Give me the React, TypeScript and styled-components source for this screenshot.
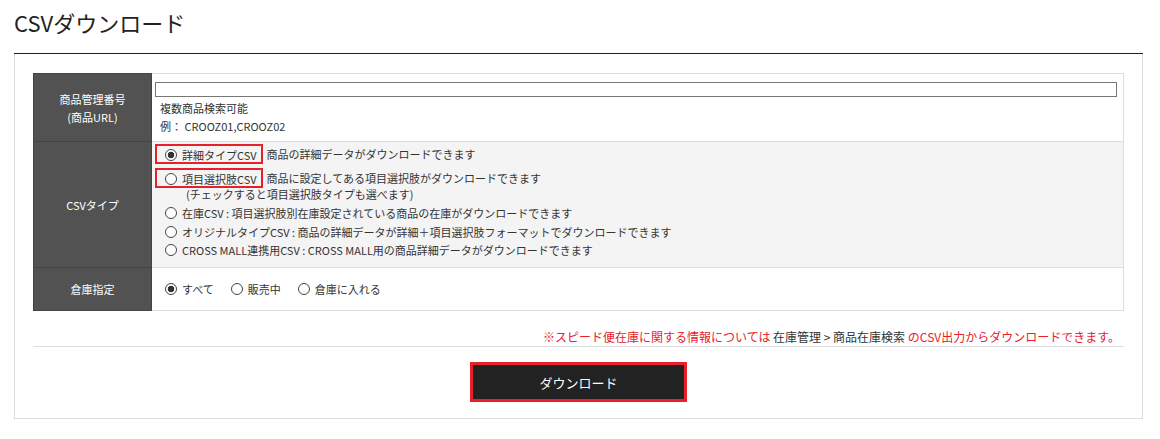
import React from "react";
import styled, { createGlobalStyle, css } from "styled-components";

const RED = "#e8202a";

const GlobalStyle = createGlobalStyle`
  body {
    margin: 0;
    background: #fff;
    color: #333;
    font-family: "Noto Sans CJK JP", "Noto Sans", sans-serif;
    font-size: 11px;
  }
`;

const Page = styled.div`
  padding: 0 17px 0 14px;
`;

const TitleBar = styled.div`
  height: 54px;
  box-sizing: border-box;
  padding-top: 7px;
  border-bottom: 1px solid #222;
`;

const Title = styled.h1`
  margin: 0;
  font-size: 22px;
  font-weight: 400;
  line-height: 30px;
  color: #222;
`;

const Panel = styled.div`
  border: 1px solid #ddd;
  border-top: none;
  padding: 19px 18px 16px;
  display: flex;
  flex-direction: column;
`;

const Table = styled.table`
  width: 100%;
  border-collapse: collapse;
  table-layout: fixed;
`;

const Head = styled.th`
  width: 117px;
  background: #525252;
  color: #fff;
  font-weight: 400;
  font-size: 11px;
  line-height: 18px;
  border: 1px solid #444;
  text-align: center;
  vertical-align: middle;
  padding: 0;
`;

const Cell = styled.td<{ $height: number; $shade?: boolean }>`
  height: ${(p) => p.$height}px;
  box-sizing: border-box;
  border: 1px solid #ddd;
  background: ${(p) => (p.$shade ? "#f4f4f4" : "#fff")};
  vertical-align: top;
  padding: 0;
`;

const SearchBox = styled.div`
  padding: 8px 6px 6px 3px;
`;

const TextInput = styled.input`
  display: block;
  width: 100%;
  height: 15px;
  box-sizing: border-box;
  border: 1px solid #777;
  padding: 0;
  margin: 0 0 2px;
  background: #fff;
`;

const Hint = styled.div`
  padding-left: 5px;
  line-height: 18px;
`;

const TypeList = styled.div`
  padding: 2px 6px 6px 13px;
  display: flex;
  flex-direction: column;
`;

const OptionLine = styled.div<{ $gap?: number }>`
  display: flex;
  align-items: center;
  min-height: 18.5px;
  margin-top: ${(p) => p.$gap ?? 0}px;
  white-space: nowrap;
`;

const Radio = styled.input.attrs({ type: "radio" })`
  appearance: none;
  width: 12px;
  height: 12px;
  margin: 0 5px 0 0;
  border: 1px solid #444;
  border-radius: 50%;
  background: #fff;
  flex: none;
  &:checked {
    background: radial-gradient(circle, #333 0 3px, #fff 3.6px);
  }
`;

const Choice = styled.label<{ $marked?: boolean }>`
  display: inline-flex;
  align-items: center;
  ${(p) =>
    p.$marked &&
    css`
      height: 20px;
      box-sizing: border-box;
      border: 2px solid ${RED};
      padding: 1px 4px 0 8px;
      margin: 0 -6px 0 -10px;
    `}
`;

const Desc = styled.span`
  margin-left: 10px;
`;

const Aside = styled.div`
  padding-left: 21px;
  line-height: 14px;
  margin-top: -1px;
`;

const InlineChoices = styled.div`
  height: 41px;
  display: flex;
  align-items: center;
  gap: 17px;
  padding-left: 13px;
`;

const Note = styled.div`
  text-align: right;
  font-size: 12px;
  line-height: 16px;
  padding: 18px 4px 1px;
  border-bottom: 1px solid #ddd;
  color: ${RED};
`;

const Plain = styled.span`
  color: #333;
`;

const Actions = styled.div`
  display: flex;
  justify-content: center;
  margin-top: 15px;
`;

const DownloadButton = styled.button`
  width: 217px;
  height: 40px;
  box-sizing: border-box;
  border: 3px solid ${RED};
  background: #222;
  color: #fff;
  font-family: inherit;
  font-size: 13px;
  cursor: pointer;
`;

const csvTypes = [
  { key: "inventory", label: "在庫CSV : 項目選択肢別在庫設定されている商品の在庫がダウンロードできます" },
  { key: "original", label: "オリジナルタイプCSV : 商品の詳細データが詳細＋項目選択肢フォーマットでダウンロードできます" },
  { key: "crossmall", label: "CROSS MALL連携用CSV : CROSS MALL用の商品詳細データがダウンロードできます" },
];

const stockOptions = [
  { key: "all", label: "すべて" },
  { key: "sale", label: "販売中" },
  { key: "warehouse", label: "倉庫に入れる" },
];

export default function App() {
  return (
    <Page>
      <GlobalStyle />
      <TitleBar>
        <Title>CSVダウンロード</Title>
      </TitleBar>
      <Panel>
        <Table>
          <tbody>
            <tr>
              <Head>
                商品管理番号
                <br />
                (商品URL)
              </Head>
              <Cell $height={68}>
                <SearchBox>
                  <TextInput type="text" />
                  <Hint>複数商品検索可能</Hint>
                  <Hint>例： CROOZ01,CROOZ02</Hint>
                </SearchBox>
              </Cell>
            </tr>
            <tr>
              <Head>CSVタイプ</Head>
              <Cell $height={126} $shade>
                <TypeList>
                  <OptionLine>
                    <Choice $marked>
                      <Radio name="csvType" defaultChecked />
                      詳細タイプCSV
                    </Choice>
                    <Desc>商品の詳細データがダウンロードできます</Desc>
                  </OptionLine>
                  <OptionLine $gap={4}>
                    <Choice $marked>
                      <Radio name="csvType" />
                      項目選択肢CSV
                    </Choice>
                    <Desc>商品に設定してある項目選択肢がダウンロードできます</Desc>
                  </OptionLine>
                  <Aside>(チェックすると項目選択肢タイプも選べます)</Aside>
                  {csvTypes.map((t, i) => (
                    <OptionLine key={t.key} $gap={i === 0 ? 3 : 0}>
                      <Choice>
                        <Radio name="csvType" />
                        {t.label}
                      </Choice>
                    </OptionLine>
                  ))}
                </TypeList>
              </Cell>
            </tr>
            <tr>
              <Head>倉庫指定</Head>
              <Cell $height={43}>
                <InlineChoices>
                  {stockOptions.map((o, i) => (
                    <Choice key={o.key}>
                      <Radio name="stock" defaultChecked={i === 0} />
                      {o.label}
                    </Choice>
                  ))}
                </InlineChoices>
              </Cell>
            </tr>
          </tbody>
        </Table>
        <Note>
          ※スピード便在庫に関する情報については <Plain>在庫管理 &gt; 商品在庫検索</Plain> のCSV出力からダウンロードできます。
        </Note>
        <Actions>
          <DownloadButton type="button">ダウンロード</DownloadButton>
        </Actions>
      </Panel>
    </Page>
  );
}
